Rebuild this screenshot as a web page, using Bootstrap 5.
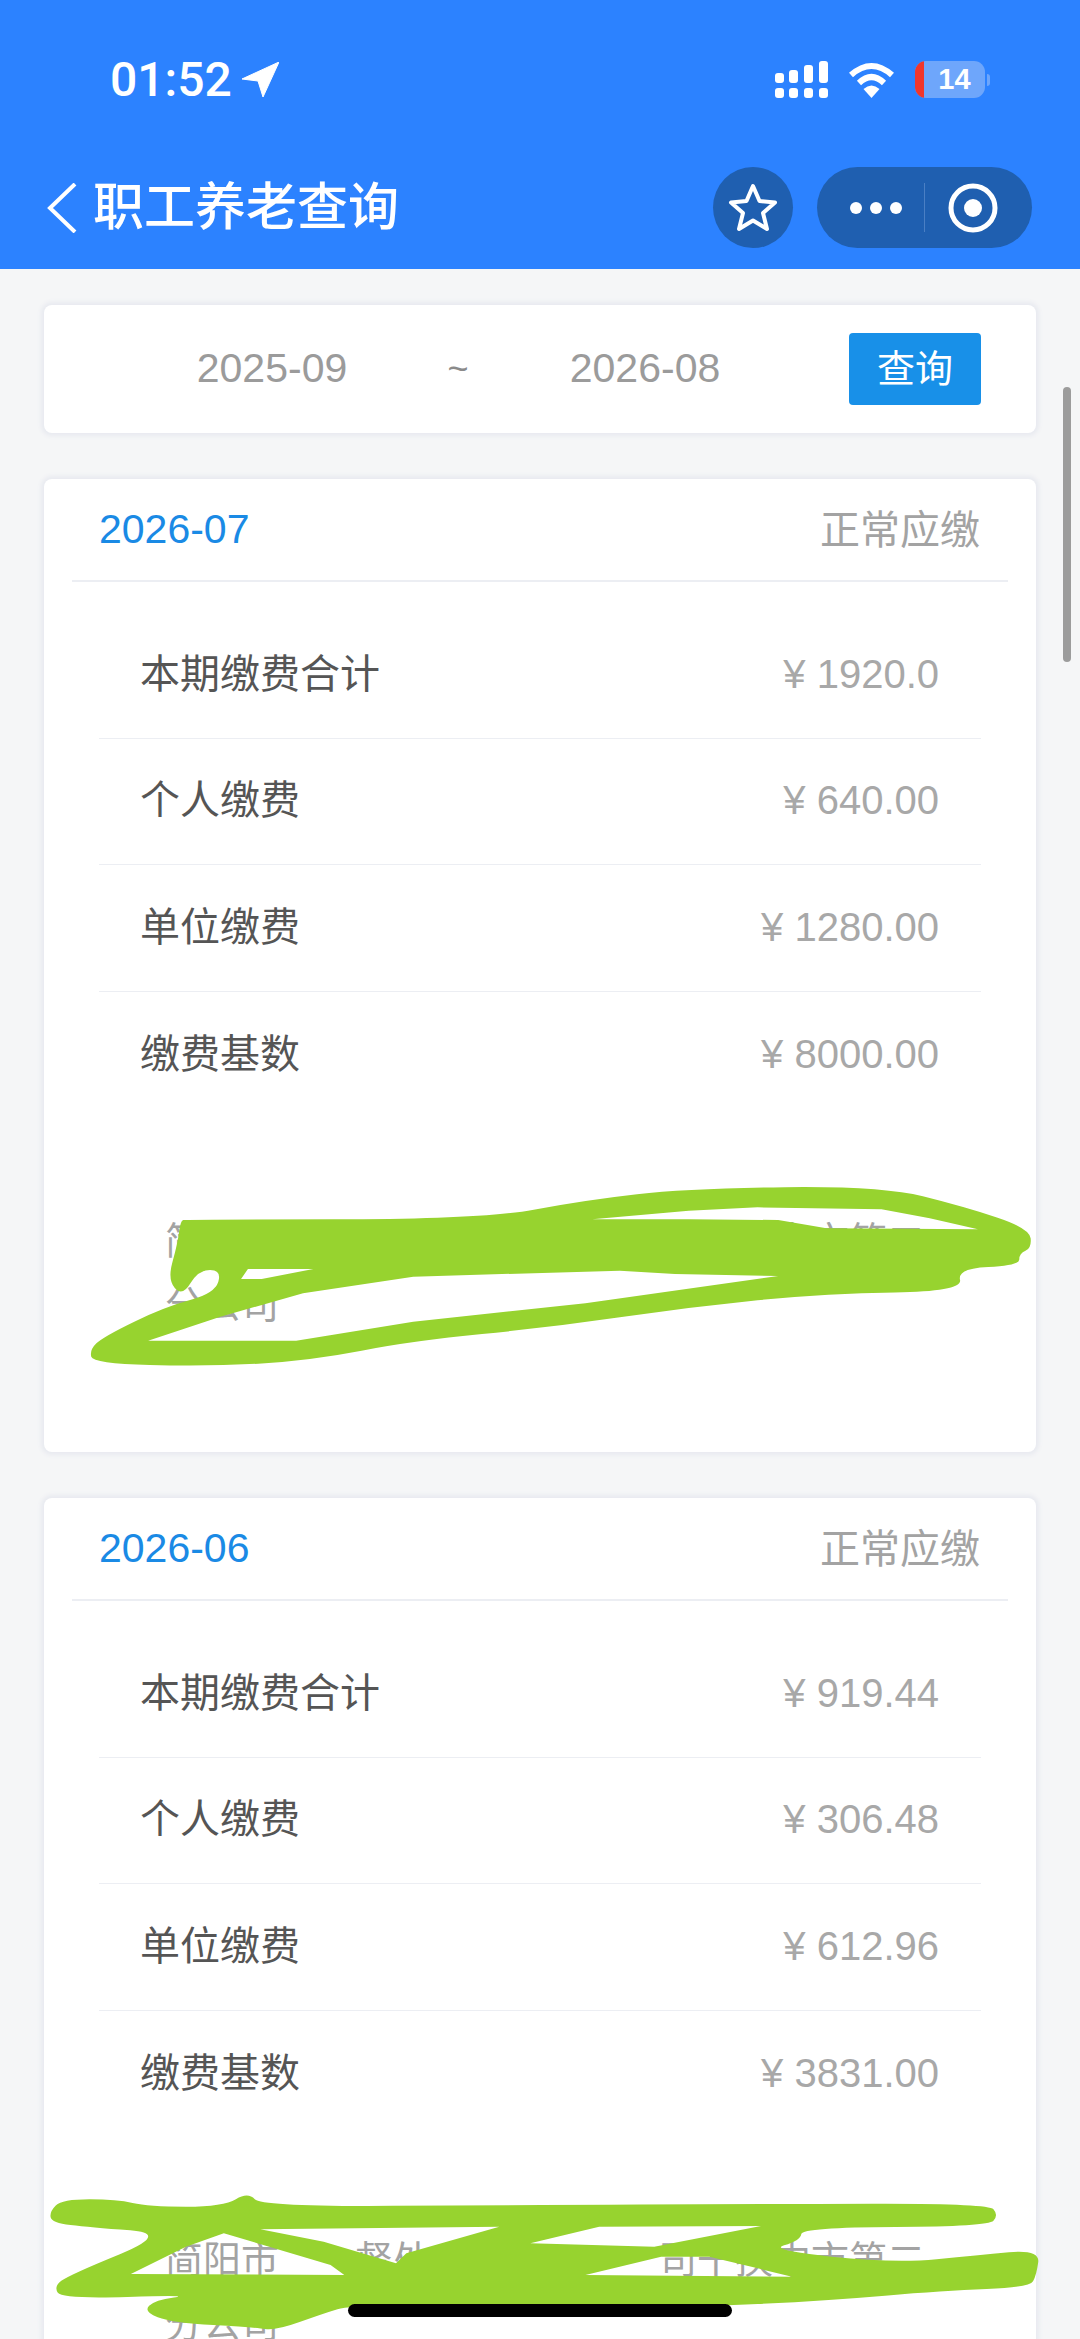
<!DOCTYPE html>
<html lang="zh-CN">
<head>
    <meta charset="UTF-8">
    <meta name="viewport" content="width=device-width, initial-scale=1.0">
    <title>职工养老查询</title>
    <link href="https://cdn.jsdelivr.net/npm/bootstrap@5.3.0/dist/css/bootstrap.min.css" rel="stylesheet">
    <style>
        html, body { height: 2339px; overflow: hidden; }
        body { background: #f5f6f7; font-family: "Liberation Sans", "Noto Sans CJK SC", sans-serif; position: relative; }

        /* blue top area */
        .top-area { background: #2c82ff; height: 269px; color: #fff; }
        .status-row { height: 37px; padding: 61px 0 0 110px; box-sizing: content-box; }
        .clock { font-family: Roboto, sans-serif; font-weight: 500; font-size: 48px; line-height: 37px; width: 132px; }
        .status-icons { margin-left: auto; width: 305px; }
        .wifi-icon, .battery-box { margin-left: 20px; }
        .battery-box { width: 70px; height: 37px; background: #6ea6fb; border-radius: 11px; overflow: hidden; font-size: 29px; font-weight: 700; line-height: 37px; }
        .battery-low { width: 9px; background: #f0362c; }
        .battery-nub { width: 3px; height: 12px; background: #6ea6fb; border-radius: 0 3px 3px 0; margin-left: 2px; }
        .title-row { height: 81px; margin-top: 69px; padding-left: 47px; }
        .page-title { font-size: 51px; line-height: 81px; margin-left: 16px; font-weight: 500; }
        .fav-btn { width: 80px; height: 81px; border-radius: 50%; background: #1f5fb0; margin-left: auto; }
        .capsule { width: 215px; height: 81px; border-radius: 41px; background: #1f5fb0; margin: 0 48px 0 24px; }
        .capsule-dots { margin-left: 32px; }
        .capsule-line { width: 1px; height: 49px; background: #4a7fc4; margin: 0 23px 0 21px; }

        /* cards */
        .sheet { width: 992px; margin-left: 44px; border: 0; border-radius: 8px; box-shadow: 0 0 4px 3px #e8eaf0; }
        .range-bar { height: 128px; margin-top: 36px; padding-left: 86px; display: grid; grid-template-columns: 284px 88px 286px 193px; align-items: center; }
        .range-date { font-size: 41px; color: #9b9b9b; text-align: center; }
        .range-sep { font-size: 36px; color: #8a8a8a; text-align: center; }
        .query-btn { width: 132px; height: 72px; margin-left: 61px; padding: 0; font-size: 38px; line-height: 72px; color: #fff; background: #1890e8; border: 0; border-radius: 4px; }
        .pay-card { height: 973px; margin-top: 46px; }
        .pay-head { height: 103px; margin: 0 28px; padding: 0 0 0 27px; border-bottom: 2px solid #eceef3; }
        .pay-month { font-size: 41px; color: #1a8ae5; }
        .pay-state { font-size: 40px; color: #a3a3a3; line-height: 1; margin-right: 28px; margin-left: auto; }
        .pay-list { margin: 30px 55px 0; }
        .pay-row { height: 126.5px; padding: 0 42px 2px 41px; background: transparent; border-color: #eceef3; border-width: 0 0 2px; }
        .pay-label { font-size: 40px; color: #555; }
        .pay-value { font-size: 40px; color: #a8a8a8; }
        .pay-unit { margin: 91px 100px 0 121px; font-size: 38px; line-height: 64px; color: #a3a3a3; }

        /* things lying over the page */
        .scroll-thumb { position: absolute; left: 1063px; top: 387px; width: 8px; height: 275px; border-radius: 4px; background: #9c9c9c; }
        .scribbles { position: absolute; left: 0; top: 0; pointer-events: none; }
        .home-bar { position: absolute; left: 348px; top: 2304px; width: 384px; height: 13px; border-radius: 7px; background: #000; }
    </style>
</head>
<body>
    <!-- Blue header -->
    <div class="top-area">
        <div class="status-row d-flex align-items-center">
            <div class="clock d-flex align-items-center">01:52</div>
            <svg width="37" height="35" viewBox="0 0 37 35"><path d="M37 0 L21 35 L16 19 L0 17 Z" fill="#fff" stroke="#fff" stroke-width="1" stroke-linejoin="round"/></svg>
            <div class="status-icons d-flex align-items-center">
                <svg width="53" height="37" viewBox="0 0 53 37" fill="#fff">
                    <rect x="0" y="12" width="9" height="10" rx="3"/><rect x="14" y="9" width="9" height="13" rx="3"/><rect x="29" y="4" width="9" height="18" rx="3"/><rect x="44" y="0" width="9" height="22" rx="3"/>
                    <rect x="0" y="27" width="9" height="10" rx="3"/><rect x="14" y="27" width="9" height="10" rx="3"/><rect x="29" y="27" width="9" height="10" rx="3"/><rect x="44" y="27" width="9" height="10" rx="3"/>
                </svg>
                <svg class="wifi-icon" width="47" height="36" viewBox="0 0 47 36" fill="none" stroke="#fff" stroke-width="6">
                    <path d="M3 13 Q23.500 -5 44 13"/><path d="M11 21 Q23.500 9 36 21"/><path d="M23.500 36 L15.500 27 Q23.500 20 31.500 27 Z" fill="#fff" stroke="none"/>
                </svg>
                <div class="battery-box d-flex">
                    <div class="battery-low"></div>
                    <div class="flex-grow-1 text-center">14</div>
                </div>
                <div class="battery-nub"></div>
            </div>
        </div>
        <div class="title-row d-flex align-items-center">
            <svg width="30" height="50" viewBox="0 0 30 50" fill="none" stroke="#fff" stroke-width="4"><path d="M28 1 L3 25 L28 49"/></svg>
            <div class="page-title">职工养老查询</div>
            <div class="fav-btn d-flex align-items-center justify-content-center">
                <svg width="50" height="50" viewBox="0 0 50 50" fill="none" stroke="#fff" stroke-width="4" stroke-linejoin="round"><path d="M25 3 L31.500 18 L47 19.500 L35 30 L39 46 L25 37.500 L11 46 L15 30 L3 19.500 L18.500 18 Z"/></svg>
            </div>
            <div class="capsule d-flex align-items-center">
                <svg class="capsule-dots" width="54" height="14" viewBox="0 0 54 14" fill="#fff"><circle cx="7" cy="7" r="6"/><circle cx="27" cy="7" r="6"/><circle cx="47" cy="7" r="6"/></svg>
                <div class="capsule-line"></div>
                <svg width="50" height="50" viewBox="0 0 50 50"><circle cx="25" cy="25" r="22" fill="none" stroke="#fff" stroke-width="5"/><circle cx="25" cy="25" r="9" fill="#fff"/></svg>
            </div>
        </div>
    </div>

    <!-- Date range -->
    <div class="card sheet range-bar">
        <div class="range-date">2025-09</div>
        <div class="range-sep">~</div>
        <div class="range-date">2026-08</div>
        <button type="button" class="btn query-btn">查询</button>
    </div>

    <!-- Month cards, filled below -->
    <div id="payCards"></div>

    <div class="scroll-thumb"></div>

    <!-- Green pen marks over the company name -->
    <svg class="scribbles" width="1080" height="2339" viewBox="0 0 1080 2339">
        <path id="markOne" fill="#97d32f" fill-rule="evenodd" transform="translate(0 1100) scale(.6887 .3333)"/>
        <path id="markTwo" fill="#97d32f" fill-rule="evenodd" transform="translate(0 2100) scale(.6887 .3333)"/>
    </svg>

    <div class="home-bar"></div>

    <script src="https://cdn.jsdelivr.net/npm/bootstrap@5.3.0/dist/js/bootstrap.bundle.min.js"></script>
    <script>
        const months = [
            { month: '2026-07', total: '1920.0', self: '640.00', unit: '1280.00', base: '8000.00' },
            { month: '2026-06', total: '919.44', self: '306.48', unit: '612.96', base: '3831.00' }
        ];

        document.getElementById('payCards').innerHTML = months.map(m => `
            <div class="card sheet pay-card">
                <div class="pay-head d-flex align-items-center">
                    <div class="pay-month">${m.month}</div>
                    <div class="pay-state">正常应缴</div>
                </div>
                <ul class="list-group list-group-flush pay-list">
                    ${[['本期缴费合计', m.total], ['个人缴费', m.self], ['单位缴费', m.unit], ['缴费基数', m.base]].map(r => `
                        <li class="list-group-item pay-row d-flex align-items-center justify-content-between">
                            <span class="pay-label">${r[0]}</span>
                            <span class="pay-value">¥ ${r[1]}</span>
                        </li>`).join('')}
                </ul>
                <div class="pay-unit">简阳市　　督处　　　　　　司干换中市第二<br>分公司</div>
            </div>`).join('');

        // rounded closed outline through the midpoints of a point list
        function blob(pts) {
            const mid = (a, b) => ((a[0] + b[0]) / 2) + ' ' + ((a[1] + b[1]) / 2);
            let d = 'M' + mid(pts[pts.length - 1], pts[0]);
            pts.forEach((p, i) => { d += ' Q' + p[0] + ' ' + p[1] + ' ' + mid(p, pts[(i + 1) % pts.length]); });
            return d + ' Z ';
        }

        // holes in the marks have sharp tips
        function hole(pts) {
            return 'M' + pts.map(p => p[0] + ' ' + p[1]).join(' L') + ' Z ';
        }

        document.getElementById('markOne').setAttribute('d',
            blob([[262,362],[270,358],[700,358],[850,300],[1000,265],[1280,258],[1400,320],[1495,385],[1498,445],[1480,460],[1480,497],[1390,505],[1398,575],[1200,580],[1000,622],[800,682],[600,722],[450,782],[300,800],[135,790],[130,750],[150,710],[240,620],[312,580],[322,510],[288,510],[265,590],[243,540],[258,430]]) +
            hole([[860,358],[1000,332],[1100,322],[1280,328],[1350,355],[1420,388],[1200,385],[1130,360],[1000,358]]) +
            hole([[215,722],[320,650],[440,580],[600,530],[900,512],[980,522],[1130,528],[850,610],[600,665],[430,722]]) +
            hole([[350,537],[380,537],[455,507],[360,507]]));

        document.getElementById('markTwo').setAttribute('d',
            blob([[72,335],[90,298],[170,298],[215,320],[325,320],[360,275],[380,320],[760,315],[1100,312],[1435,310],[1450,345],[1435,380],[1165,382],[1162,422],[1115,450],[1300,490],[1420,465],[1510,448],[1505,525],[1495,562],[1370,572],[1200,602],[1000,622],[700,622],[510,615],[470,640],[400,692],[370,682],[250,668],[208,635],[225,600],[280,585],[90,597],[78,560],[100,525],[248,400],[130,382],[75,368]]) +
            hole([[378,388],[725,380],[590,460],[575,490],[470,425]]) +
            hole([[870,380],[1105,378],[950,440],[770,430]]) +
            hole([[190,522],[270,440],[325,400],[480,495],[500,525]]) +
            hole([[850,525],[960,470],[1030,470],[1150,530]]));
    </script>
</body>
</html>
